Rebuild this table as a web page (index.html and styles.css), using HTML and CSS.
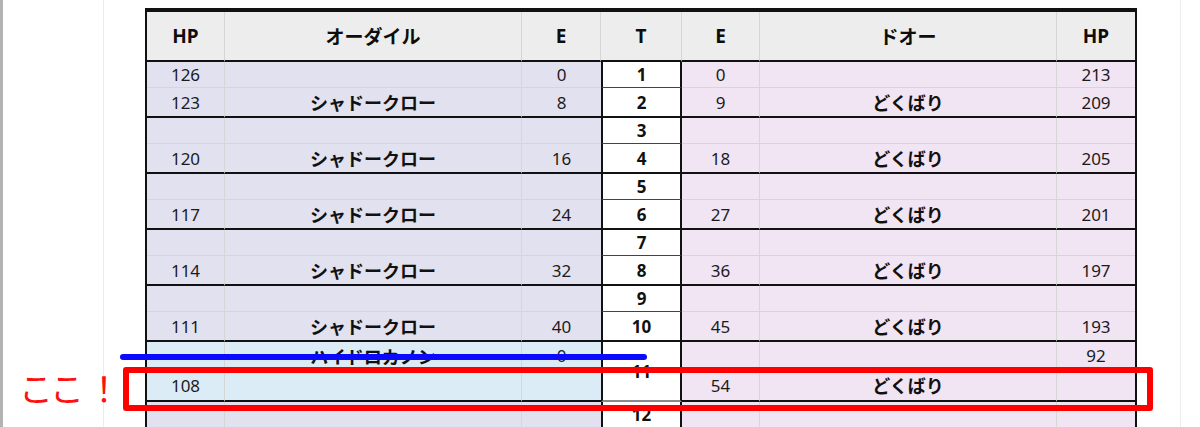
FILE: index.html
```html
<!DOCTYPE html>
<html lang="ja">
<head>
<meta charset="UTF-8">
<meta name="viewport" content="width=device-width, initial-scale=1.0">
<title>ターン表</title>
<link rel="stylesheet" href="styles.css">
</head>
<body>
<div class="screen">
    <div class="sheet">
        <table class="battle">
            <colgroup>
                <col class="c-hp">
                <col class="c-name">
                <col class="c-e1">
                <col class="c-t">
                <col class="c-e2">
                <col class="c-name">
                <col class="c-hp2">
            </colgroup>
            <thead>
                <tr class="head">
                    <th>HP</th>
                    <th>オーダイル</th>
                    <th>E</th>
                    <th>T</th>
                    <th>E</th>
                    <th>ドオー</th>
                    <th class="last">HP</th>
                </tr>
            </thead>
            <tbody>
                <tr class="a">
                    <td class="l">126</td><td class="l move"></td><td class="l e1">0</td>
                    <td class="t">1</td>
                    <td class="r">0</td><td class="r move"></td><td class="r last">213</td>
                </tr>
                <tr class="b">
                    <td class="l">123</td><td class="l move">シャドークロー</td><td class="l e1">8</td>
                    <td class="t">2</td>
                    <td class="r">9</td><td class="r move">どくばり</td><td class="r last">209</td>
                </tr>
                <tr class="a">
                    <td class="l"></td><td class="l move"></td><td class="l e1"></td>
                    <td class="t">3</td>
                    <td class="r"></td><td class="r move"></td><td class="r last"></td>
                </tr>
                <tr class="b">
                    <td class="l">120</td><td class="l move">シャドークロー</td><td class="l e1">16</td>
                    <td class="t">4</td>
                    <td class="r">18</td><td class="r move">どくばり</td><td class="r last">205</td>
                </tr>
                <tr class="a">
                    <td class="l"></td><td class="l move"></td><td class="l e1"></td>
                    <td class="t">5</td>
                    <td class="r"></td><td class="r move"></td><td class="r last"></td>
                </tr>
                <tr class="b">
                    <td class="l">117</td><td class="l move">シャドークロー</td><td class="l e1">24</td>
                    <td class="t">6</td>
                    <td class="r">27</td><td class="r move">どくばり</td><td class="r last">201</td>
                </tr>
                <tr class="a">
                    <td class="l"></td><td class="l move"></td><td class="l e1"></td>
                    <td class="t">7</td>
                    <td class="r"></td><td class="r move"></td><td class="r last"></td>
                </tr>
                <tr class="b">
                    <td class="l">114</td><td class="l move">シャドークロー</td><td class="l e1">32</td>
                    <td class="t">8</td>
                    <td class="r">36</td><td class="r move">どくばり</td><td class="r last">197</td>
                </tr>
                <tr class="a">
                    <td class="l"></td><td class="l move"></td><td class="l e1"></td>
                    <td class="t">9</td>
                    <td class="r"></td><td class="r move"></td><td class="r last"></td>
                </tr>
                <tr class="b">
                    <td class="l">111</td><td class="l move">シャドークロー</td><td class="l e1">40</td>
                    <td class="t">10</td>
                    <td class="r">45</td><td class="r move">どくばり</td><td class="r last">193</td>
                </tr>
                <tr class="a tall">
                    <td class="w"></td><td class="w move">ハイドロカノン</td><td class="w e1">0</td>
                    <td class="t merged" rowspan="2">11</td>
                    <td class="r"></td><td class="r move"></td><td class="r last">92</td>
                </tr>
                <tr class="b tall">
                    <td class="w">108</td><td class="w move"></td><td class="w e1"></td>
                    <td class="r">54</td><td class="r move">どくばり</td><td class="r last"></td>
                </tr>
                <tr class="a">
                    <td class="l"></td><td class="l move"></td><td class="l e1"></td>
                    <td class="t">12</td>
                    <td class="r"></td><td class="r move"></td><td class="r last"></td>
                </tr>
            </tbody>
        </table>
    </div>

    <!-- marks drawn over the sheet -->
    <div class="strike"></div>
    <div class="frame-mark"></div>
    <div class="note">ここ<span class="bang">！</span></div>
</div>
</body>
</html>
```

FILE: styles.css
```css
body {
    margin: 0;
    background-color: #fff;
    font-family: "Noto Sans", "Noto Sans CJK JP", sans-serif;
    color: #1b1b1b;
}
.screen {
    position: relative;
    height: 427px;
    overflow: hidden;
    border-left: 3px solid #b3b3b3;
}
.sheet {
    box-sizing: border-box;
    width: 1078px;
    height: 100%;
    margin-left: 100px;
    padding: 8px 0 0 41px;
    border-left: 1px solid #ececec;
    border-right: 1px solid #ececec;
}
.battle {
    width: 992px;
    table-layout: fixed;
    border-collapse: separate;
    border-spacing: 0;
    border-top: 4px solid #111;
    border-left: 2px solid #111;
    border-right: 2px solid #111;
}
.c-hp { width: 78px; }
.c-name { width: 297px; }
.c-e1 { width: 79px; }
.c-t { width: 81px; }
.c-e2 { width: 78px; }
.c-hp2 { width: 78px; }

th, td {
    padding: 0;
    text-align: center;
    vertical-align: middle;
    white-space: nowrap;
    border-right: 1px solid #d6d6d6;
    border-bottom: 1px solid #d6d6d6;
}
th {
    font-size: 19px;
    font-weight: 700;
    color: #0d0d0d;
    background-color: #ededed;
    border-bottom: 2px solid #111;
}
tr.head { height: 50px; }
tr.a { height: 26px; }
tr.b { height: 30px; }
tr.a.tall { height: 28px; }
tr.b.tall { height: 32px; }

td { font-size: 17px; }
td.l { background-color: #e2e1f0; }
td.r { background-color: #f1e4f3; }
td.w { background-color: #dbecf7; }
td.move {
    font-size: 18px;
    font-weight: 700;
    color: #111;
}
td.e1 { border-right: none; }
th.last, td.last { border-right: none; }
tr.b td { border-bottom: 2px solid #111; }

td.t {
    background-color: #fff;
    font-size: 17px;
    font-weight: 700;
    color: #111;
    border-left: 2px solid #111;
    border-right: 2px solid #111;
}
tr.a td.t { border-bottom: 1px solid #444; }
tr.a td.t.merged { border-bottom: 2px solid #8a8a8a; }

.strike {
    position: absolute;
    left: 117px;
    top: 354px;
    width: 527px;
    height: 6px;
    border-radius: 3px;
    background-color: #0a0aff;
}
.frame-mark {
    position: absolute;
    left: 120px;
    top: 367px;
    box-sizing: border-box;
    width: 1030px;
    height: 44px;
    border: 6px solid #ff0000;
    border-radius: 3px;
}
.note {
    position: absolute;
    left: 16px;
    top: 363px;
    font-family: "Noto Sans CJK JP", sans-serif;
    font-size: 34px;
    font-weight: 400;
    line-height: 50px;
    letter-spacing: -3px;
    color: #ff1010;
}
.bang { margin-left: 6px; }
```
